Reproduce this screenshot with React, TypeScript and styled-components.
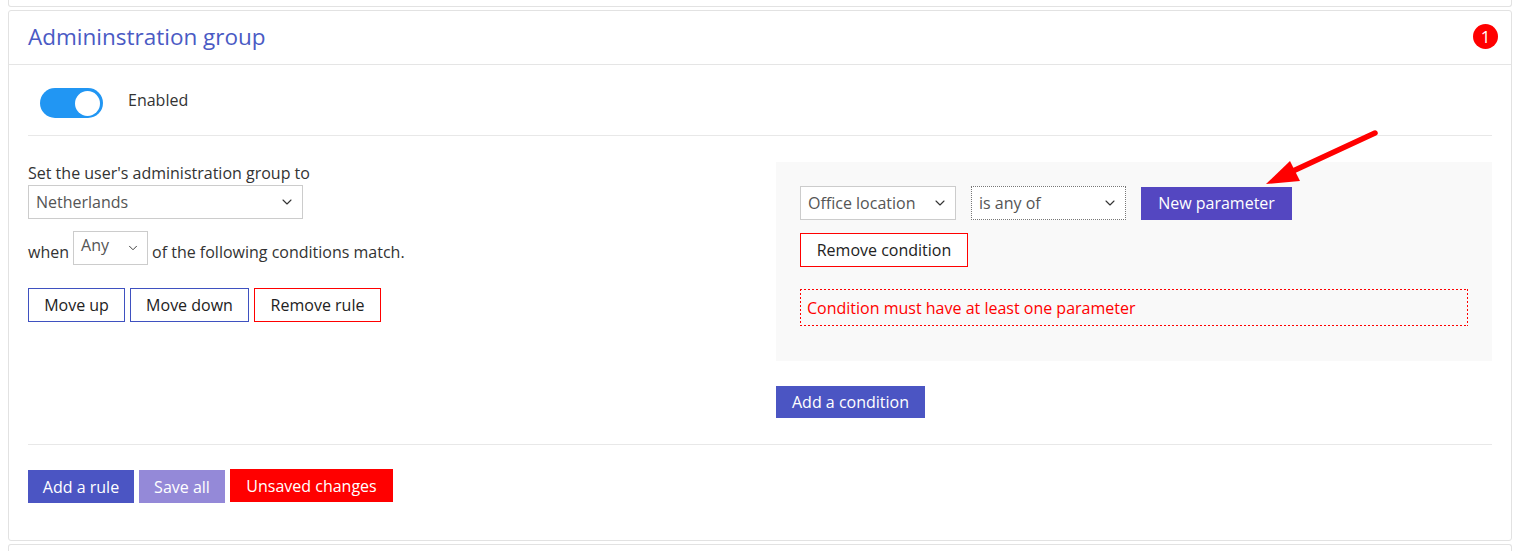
import React from 'react'
import styled, { createGlobalStyle } from 'styled-components'
import { ChevronDown } from 'lucide-react'

const GlobalStyle = createGlobalStyle`
    html, body {
        margin: 0;
        padding: 0;
        background: #fff;
    }
    body {
        font-family: "Open Sans", "Noto Sans", Arial, sans-serif;
        color: #333;
        font-size: 16px;
    }
`

const Page = styled.div`
    padding: 0 8px;
    display: flex;
    flex-direction: column;
    gap: 3px;
`

const PrevCard = styled.div`
    height: 6px;
    border: 1px solid #e2e2e2;
    border-top: none;
    border-radius: 0 0 3px 3px;
`

const Card = styled.div`
    position: relative;
    border: 1px solid #e2e2e2;
    border-radius: 3px;
    background: #fff;
`

const NextCard = styled.div`
    height: 10px;
    border: 1px solid #e2e2e2;
    border-bottom: none;
    border-radius: 3px 3px 0 0;
`

const Header = styled.div`
    height: 53px;
    display: flex;
    align-items: center;
    justify-content: space-between;
    padding: 0 13px 0 19px;
    border-bottom: 1px solid #e5e5e5;
`

const Title = styled.h2`
    margin: 0 0 2px;
    font-size: 22.5px;
    font-weight: 400;
    color: #4a5ac4;
`

const Badge = styled.span`
    width: 25px;
    height: 25px;
    border-radius: 50%;
    background: #f00;
    color: #fff;
    font-size: 17px;
    display: flex;
    align-items: center;
    justify-content: center;
    margin-bottom: 2px;
`

const Body = styled.div`
    padding: 0 19px 37px;
`

const ToggleRow = styled.div`
    display: flex;
    align-items: center;
    gap: 25px;
    padding: 23px 0 17px 12px;
    border-bottom: 1px solid #e8e8e8;
`

const Toggle = styled.div<{ $on: boolean }>`
    width: 63px;
    height: 30px;
    border-radius: 15px;
    background: ${p => (p.$on ? '#2196f3' : '#ccc')};
    display: flex;
    align-items: center;
    justify-content: ${p => (p.$on ? 'flex-end' : 'flex-start')};
    padding: 0 3px;
    box-sizing: border-box;
`

const Knob = styled.div`
    width: 25px;
    height: 25px;
    border-radius: 50%;
    background: #fff;
`

const ToggleLabel = styled.span`
    padding-bottom: 7px;
    color: #333;
`

const RuleSection = styled.div`
    display: grid;
    grid-template-columns: 1fr 1fr;
    column-gap: 32px;
    padding: 26px 0 26px;
    border-bottom: 1px solid #e8e8e8;
`

const LeftCol = styled.div`
    display: flex;
    flex-direction: column;
    align-items: flex-start;
`

const Label = styled.div`
    line-height: 22px;
    margin-bottom: 1px;
`

const SelectBox = styled.div<{ $w: number; $dotted?: boolean }>`
    position: relative;
    width: ${p => p.$w}px;
    height: 34px;
    box-sizing: border-box;
    border: 1px ${p => (p.$dotted ? 'dotted #777' : 'solid #ccc')};
    background: #fff;
    color: #555;
    display: flex;
    align-items: center;
    padding: 0 7px;
    flex-shrink: 0;
`

const SmallValue = styled.span`
    margin-top: -6px;
`

const Chevron = styled(ChevronDown)`
    position: absolute;
    right: 7px;
    top: 50%;
    transform: translateY(-50%);
    color: #333;
`

const WhenRow = styled.div`
    display: flex;
    align-items: center;
    gap: 4px;
    margin-top: 12px;
`

const WhenText = styled.span`
    padding-top: 7px;
`

const ButtonRow = styled.div<{ $mt: number; $gap: number }>`
    display: flex;
    align-items: flex-start;
    gap: ${p => p.$gap}px;
    margin-top: ${p => p.$mt}px;
`

const OutlineButton = styled.button<{ $color: string; $w: number }>`
    height: 34px;
    width: ${p => p.$w}px;
    border: 1px solid ${p => p.$color};
    background: #fff;
    color: #222;
    font: inherit;
    font-size: 16px;
    padding: 0;
`

const SolidButton = styled.button<{ $bg: string; $w: number; $h?: number; $lift?: number }>`
    height: ${p => p.$h ?? 32}px;
    width: ${p => p.$w}px;
    border: none;
    background: ${p => p.$bg};
    color: #fff;
    font: inherit;
    font-size: 16px;
    padding: 0;
    margin-top: ${p => -(p.$lift ?? 0)}px;
`

const RightCol = styled.div`
    display: flex;
    flex-direction: column;
    align-items: flex-start;
`

const ConditionBox = styled.div`
    align-self: stretch;
    background: #f9f9f9;
    padding: 24px 24px 35px;
    display: flex;
    flex-direction: column;
    align-items: flex-start;
`

const ConditionRow = styled.div`
    display: flex;
    gap: 15px;
    align-items: center;
`

const ErrorBox = styled.div`
    align-self: stretch;
    margin-top: 22px;
    height: 37px;
    box-sizing: border-box;
    color: #f00;
    padding: 0 7px;
    display: flex;
    align-items: center;
    background:
        linear-gradient(to right, #f00 50%, transparent 0) top left / 4px 1px repeat-x,
        linear-gradient(to right, #f00 50%, transparent 0) bottom left / 4px 1px repeat-x,
        linear-gradient(to bottom, #f00 50%, transparent 0) top left / 1px 4px repeat-y,
        linear-gradient(to bottom, #f00 50%, transparent 0) top right / 1px 4px repeat-y;
`

const Arrow = styled.svg`
    position: absolute;
    left: 1238px;
    top: 104px;
    pointer-events: none;
`

export default function App() {
    return (
        <>
            <GlobalStyle />
            <Page>
                <PrevCard />
                <Card>
                    <Header>
                        <Title>Admininstration group</Title>
                        <Badge>1</Badge>
                    </Header>
                    <Body>
                        <ToggleRow>
                            <Toggle $on>
                                <Knob />
                            </Toggle>
                            <ToggleLabel>Enabled</ToggleLabel>
                        </ToggleRow>
                        <RuleSection>
                            <LeftCol>
                                <Label>Set the user's administration group to</Label>
                                <SelectBox $w={275}>
                                    Netherlands
                                    <Chevron size={16} strokeWidth={1.6} />
                                </SelectBox>
                                <WhenRow>
                                    <WhenText>when</WhenText>
                                    <SelectBox $w={75}>
                                        <SmallValue>Any</SmallValue>
                                        <Chevron size={14} strokeWidth={1.6} />
                                    </SelectBox>
                                    <WhenText>of the following conditions match.</WhenText>
                                </WhenRow>
                                <ButtonRow $mt={23} $gap={5}>
                                    <OutlineButton $color="#3f51c0" $w={97}>Move up</OutlineButton>
                                    <OutlineButton $color="#3f51c0" $w={119}>Move down</OutlineButton>
                                    <OutlineButton $color="#f00" $w={127}>Remove rule</OutlineButton>
                                </ButtonRow>
                            </LeftCol>
                            <RightCol>
                                <ConditionBox>
                                    <ConditionRow>
                                        <SelectBox $w={156}>
                                            Office location
                                            <Chevron size={16} strokeWidth={1.6} />
                                        </SelectBox>
                                        <SelectBox $w={155} $dotted>
                                            is any of
                                            <Chevron size={16} strokeWidth={1.6} />
                                        </SelectBox>
                                        <SolidButton $bg="#5447c1" $w={151} $h={33}>New parameter</SolidButton>
                                    </ConditionRow>
                                    <ButtonRow $mt={13} $gap={0}>
                                        <OutlineButton $color="#f00" $w={168}>Remove condition</OutlineButton>
                                    </ButtonRow>
                                    <ErrorBox>Condition must have at least one parameter</ErrorBox>
                                </ConditionBox>
                                <ButtonRow $mt={25} $gap={0}>
                                    <SolidButton $bg="#4b55c3" $w={149}>Add a condition</SolidButton>
                                </ButtonRow>
                            </RightCol>
                        </RuleSection>
                        <ButtonRow $mt={25} $gap={5}>
                            <SolidButton $bg="#4b55c3" $w={106} $h={33}>Add a rule</SolidButton>
                            <SolidButton $bg="#9489d8" $w={86} $h={33}>Save all</SolidButton>
                            <SolidButton $bg="#f00" $w={163} $h={33} $lift={1}>Unsaved changes</SolidButton>
                        </ButtonRow>
                    </Body>
                    <Arrow width="140" height="80" viewBox="0 0 140 80">
                        <line x1="128" y1="18" x2="46" y2="56" stroke="#f00" strokeWidth="5.5" strokeLinecap="round" />
                        <polygon points="19,69 43,46 53,66" fill="#f00" />
                    </Arrow>
                </Card>
                <NextCard />
            </Page>
        </>
    )
}
